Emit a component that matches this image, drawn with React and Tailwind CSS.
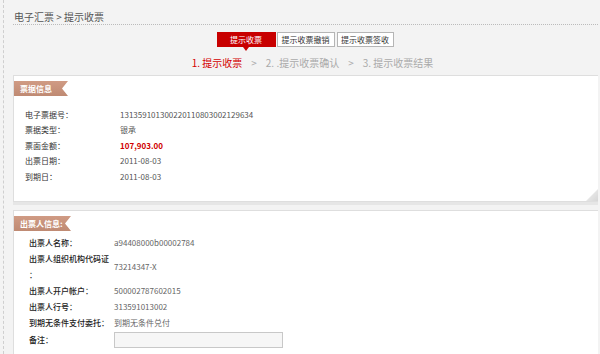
import React from "react";

const font = { fontFamily: "'Noto Sans CJK SC', 'Liberation Sans', sans-serif" };

const billRows = [
  ["电子票据号：", "131359101300220110803002129634"],
  ["票据类型：", "银承"],
  ["票面金额：", "107,903.00", true],
  ["出票日期：", "2011-08-03"],
  ["到期日：", "2011-08-03"],
];

const drawerRows = [
  ["出票人名称：", "a94408000b00002784"],
  [<>出票人组织机构代码证<br />：</>, "73214347-X"],
  ["出票人开户帐户：", "500002787602015"],
  ["出票人行号：", "313591013002"],
  ["到期无条件支付委托：", "到期无条件兑付"],
];

function Ribbon({ children, w }) {
  return (
    <div
      className={`${w} h-[15px] flex items-center pl-[6px] text-[8px] font-bold text-white bg-gradient-to-b from-[#d09b84] to-[#bf8a73] [clip-path:polygon(0_0,100%_0,calc(100%-6px)_50%,100%_100%,0_100%)]`}
    >
      {children}
    </div>
  );
}

function Fold() {
  return (
    <div className="absolute right-0 bottom-0 w-[12px] h-[12px] bg-gradient-to-br from-[#f4f4f4] to-[#d6d6d6] [clip-path:polygon(100%_0,100%_100%,0_100%)]" />
  );
}

export default function App() {
  return (
    <div className="w-[600px] h-[354px] overflow-hidden bg-[#f3f3f3] relative" style={font}>
      {/* left dashed rail */}
      <div className="absolute left-[3px] top-0 bottom-0 border-l border-dashed border-[#cfcfcf]" />

      <div className="pl-[13px] pr-[2px]">
        {/* breadcrumb */}
        <div className="h-[25px] pt-[10px] pl-[1px] text-[10px] leading-[13px] text-[#555] border-b border-dotted border-[#bbb]">
          电子汇票 &gt; 提示收票
        </div>

        {/* tabs */}
        <div className="flex justify-center pt-[7px] pr-[1px]">
          <div className="relative w-[59px] h-[15px] bg-[#c80000] text-white text-[8px] leading-[15px] text-center">
            提示收票
            <div className="absolute left-1/2 -translate-x-1/2 top-[15px] w-0 h-0 border-l-[3px] border-r-[3px] border-t-[4px] border-l-transparent border-r-transparent border-t-[#c80000]" />
          </div>
          <div className="ml-[1px] w-[58px] h-[15px] bg-white border border-[#b5b5b5] text-[#333] text-[8px] leading-[13px] text-center">
            提示收票撤销
          </div>
          <div className="ml-[2px] w-[57px] h-[15px] bg-white border border-[#b5b5b5] text-[#333] text-[8px] leading-[13px] text-center">
            提示收票签收
          </div>
        </div>

        {/* steps */}
        <div className="flex justify-center pl-[14px] mt-[9px] text-[10px] leading-[13px] text-[#aaa]">
          <span className="text-[#d40000]">1. 提示收票</span>
          <span className="mx-[9px]">&gt;</span>
          <span>2. .提示收票确认</span>
          <span className="mx-[9px]">&gt;</span>
          <span>3. 提示收票结果</span>
        </div>

        {/* panel: bill info */}
        <div className="relative mt-[6px] h-[127px] bg-white border-t border-b border-l border-[#dedede] shadow-[0_3px_0_#e6e6e6]">
          <div className="pt-[5px]">
            <Ribbon w="w-[54px]">票据信息</Ribbon>
          </div>
          <div className="pt-[11px] pl-[11px]">
            {billRows.map(([k, v, red]) => (
              <div key={k} className="flex h-[15.5px] items-center text-[8px]">
                <div className="w-[95px] text-[#333]">{k}</div>
                <div className={red ? "text-[#d00000] font-bold" : "text-[#555]"}>{v}</div>
              </div>
            ))}
          </div>
          <Fold />
        </div>

        {/* panel: drawer info */}
        <div className="relative mt-[8px] h-[150px] bg-white border-t border-l border-[#dedede]">
          <div className="pt-[5px]">
            <Ribbon w="w-[57px]">出票人信息:</Ribbon>
          </div>
          <div className="pt-[4px] pl-[15px]">
            {drawerRows.map(([k, v]) => (
              <div key={v} className="flex items-center text-[8px] leading-[16px]">
                <div className="w-[85px] text-[#222] font-medium">{k}</div>
                <div className="text-[#666]">{v}</div>
              </div>
            ))}
            <div className="flex items-center text-[8px] leading-[16px]">
              <div className="w-[85px] text-[#222] font-medium">备注：</div>
              <div className="w-[169px] h-[16px] mt-[1px] bg-[#f6f6f6] border border-[#c8c8c8]" />
            </div>
          </div>
        </div>
      </div>
    </div>
  );
}
